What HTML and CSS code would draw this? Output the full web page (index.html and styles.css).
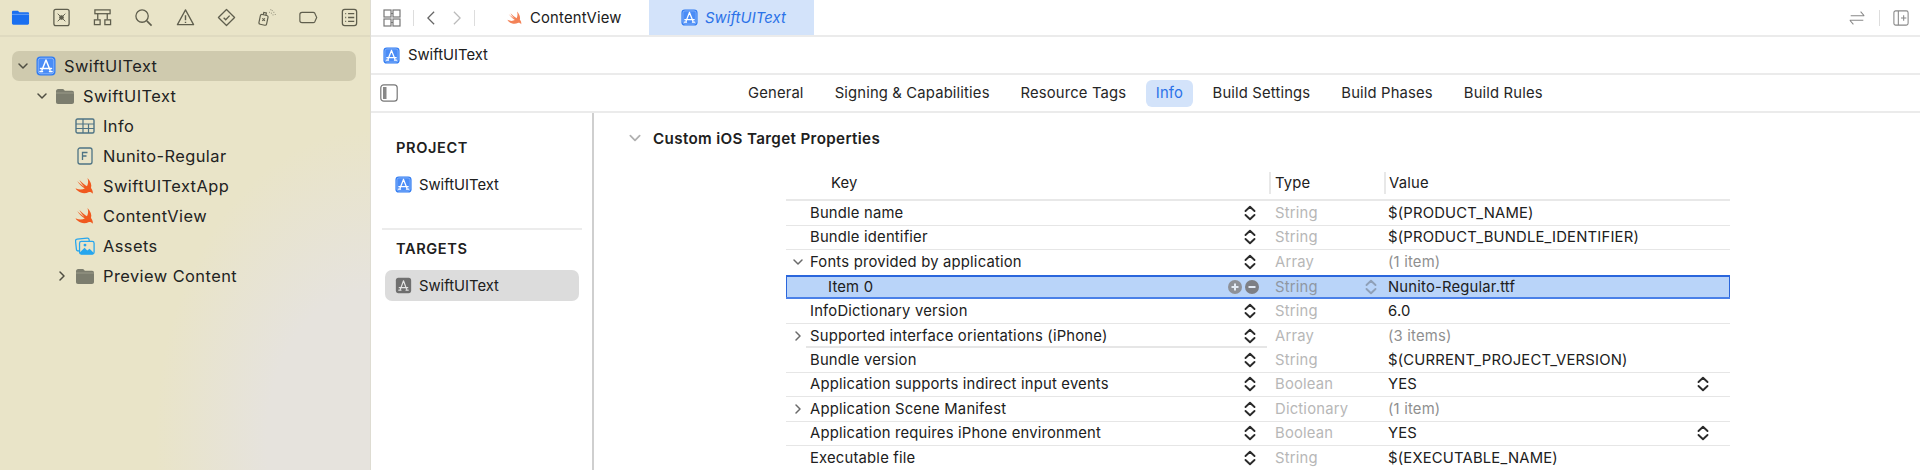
FILE: index.html
```html
<!DOCTYPE html>
<html lang="en">
<head>
<meta charset="utf-8">
<title>SwiftUIText</title>
<link rel="stylesheet" href="styles.css">
</head>
<body>
<svg class="defs" width="0" height="0" aria-hidden="true">
  <symbol id="app" viewBox="0 0 20 20">
    <rect x=".5" y=".5" width="19" height="19" rx="4" fill="#2f7bf2"/>
    <rect x="2.2" y="2.2" width="15.6" height="15.6" rx="2.5" fill="#4a8cf6" stroke="#a9c9fb" stroke-width=".7"/>
    <path d="M10 4 6 14M10 4l4 10M4.5 12.5h11M4 15.5h2.5M13.5 15.5H16" fill="none" stroke="#fff" stroke-width="1.5" stroke-linecap="round"/>
  </symbol>
  <symbol id="appgray" viewBox="0 0 20 20">
    <rect x="1" y="1" width="18" height="18" rx="3" fill="#6f6f6f"/>
    <path d="M10 4.5 6.5 14M10 4.5l3.500 9.500M5 12.500h10M4.500 15.500h2.500M13 15.500h2.500" fill="none" stroke="#e4e4e4" stroke-width="1.400" stroke-linecap="round"/>
  </symbol>
  <symbol id="swift" viewBox="0 0 20 18">
    <path d="M12.500 1C15.500 4 17 8 16 11c1.500 2 2.200 4 1.700 5.800-1-1.500-2.700-2.200-4.300-1.600-2.800 1.500-7.400 1.400-11-1.600C1.800 13.100 1.100 12.300.5 11.200c3 1.700 6.600 1.900 9.300.4C6.800 9.600 4.200 7 2.200 4c2.400 2.400 5 4.400 7.300 5.800C7.400 7.800 5.500 5.300 4.400 3c2.700 2.700 5.600 5 7.600 6.300 1.300-2.500 1.500-5.400.5-8.300z" fill="#f0591f"/>
  </symbol>
  <symbol id="folder" viewBox="0 0 20 18">
    <path d="M1 4.500C1 3 1.800 2 3.200 2h4c1 0 1.500.4 2 1l.6.8H17c1.300 0 2 .8 2 2V15c0 1.300-.8 2-2 2H3c-1.300 0-2-.8-2-2z" fill="#7c7d6e"/>
    <path d="M1 6h18" stroke="#a2a291" stroke-width=".8"/>
  </symbol>
  <symbol id="step" viewBox="0 0 16 18">
    <path d="M3.500 7 8 2.800 12.500 7M3.500 11 8 15.200 12.500 11" fill="none" stroke="currentColor" stroke-width="1.900" stroke-linecap="round" stroke-linejoin="round"/>
  </symbol>
  <symbol id="chevd" viewBox="0 0 12 12">
    <path d="M2 4l4 4 4-4" fill="none" stroke="currentColor" stroke-width="1.500" stroke-linecap="round" stroke-linejoin="round"/>
  </symbol>
  <symbol id="chevr" viewBox="0 0 12 12">
    <path d="M4 2l4 4-4 4" fill="none" stroke="currentColor" stroke-width="1.500" stroke-linecap="round" stroke-linejoin="round"/>
  </symbol>
</svg>

<div class="app">
  <aside class="side">
    <nav class="side-tools">
      <svg class="tool" viewBox="0 0 20 18"><path d="M1 3.500C1 2.500 1.600 2 2.500 2h4.800l1.500 1.500h8.700c1 0 1.500.5 1.500 1.500v10c0 1-.6 1.500-1.500 1.500h-15C1.600 16.500 1 16 1 15z" fill="#1a6ff0" stroke="none"/><path d="M1 5.700h18" stroke="#8fbaf8" stroke-width=".7"/></svg>
      <svg class="tool" viewBox="0 0 20 20"><rect x="2" y="1.500" width="16" height="17" rx="2"/><path d="M6 6l8 8M14 6l-8 8" stroke-width="1"/><circle cx="10" cy="10" r="1.800" fill="#5f5e4d"/></svg>
      <svg class="tool" viewBox="0 0 20 20"><rect x="2" y="2" width="16" height="4"/><path d="M5 6v6M15 6v6"/><rect x="1.500" y="12.500" width="6" height="5"/><rect x="12.500" y="12.500" width="6" height="5"/></svg>
      <svg class="tool" viewBox="0 0 20 20"><circle cx="8.500" cy="8.500" r="6.500"/><path d="M13.500 13.500 18.500 18.500" stroke-width="1.700"/></svg>
      <svg class="tool" viewBox="0 0 20 20"><path d="M10 2 18.500 17.500h-17z" stroke-linejoin="round"/><path d="M10 7.500v5.500M10 14.500v1.300" stroke-width="1.500"/></svg>
      <svg class="tool" viewBox="0 0 20 20"><path d="M10 1.500 18.500 10 10 18.500 1.500 10z" stroke-linejoin="round"/><path d="M7 10.200l2.200 2.200L13.300 8"/></svg>
      <svg class="tool" viewBox="0 0 22 20"><rect x="2" y="7" width="9" height="11.500" rx="1.800" transform="rotate(12 6.500 12)"/><path d="M6 7l.7-3 3 .6-.6 3M5 11l3 3M8 11l-3 3"/><path d="M13 4h.8M16 2h.8M15 5h.8M18 4h.8M17 7h.8M19.500 6.500h.8M14.500 1h.8" stroke-dasharray="1 1" stroke-width="1"/></svg>
      <svg class="tool" viewBox="0 0 22 20"><path d="M3.500 4h13c.8 0 1.300.3 1.800 1l2.200 5-2.200 5c-.5.700-1 1-1.800 1h-13C2 16 1 15 1 13.500v-7C1 5 2 4 3.500 4z"/></svg>
      <svg class="tool" viewBox="0 0 20 20"><rect x="2.500" y="1.500" width="15" height="17" rx="2.500"/><path d="M5.500 6h1M5.500 10h1M5.500 14h1M8.500 6h6.500M8.500 10h6.500M8.500 14h6.500"/></svg>
    </nav>
    <ul class="tree">
      <li class="node sel l0"><svg class="chev"><use href="#chevd"/></svg><svg class="nicon"><use href="#app"/></svg><span>SwiftUIText</span></li>
      <li class="node l1"><svg class="chev"><use href="#chevd"/></svg><svg class="nicon"><use href="#folder"/></svg><span>SwiftUIText</span></li>
      <li class="node l2"><span class="chev"></span><svg class="nicon" viewBox="0 0 20 16"><rect x="1" y="1" width="18" height="14" rx="1.500" fill="none" stroke="#4e7384" stroke-width="1.400"/><path d="M1 6h18M1 10.500h18M8 1v14M13.500 6v9" stroke="#4e7384" stroke-width="1.200"/></svg><span>Info</span></li>
      <li class="node l2"><span class="chev"></span><svg class="nicon" viewBox="0 0 20 20"><rect x="3" y="2" width="14" height="16" rx="2" fill="none" stroke="#4e7384" stroke-width="1.300"/><path d="M7.500 14V6.500h5M7.500 10h4" fill="none" stroke="#4e7384" stroke-width="1.300"/></svg><span>Nunito-Regular</span></li>
      <li class="node l2"><span class="chev"></span><svg class="nicon"><use href="#swift"/></svg><span>SwiftUITextApp</span></li>
      <li class="node l2"><span class="chev"></span><svg class="nicon"><use href="#swift"/></svg><span>ContentView</span></li>
      <li class="node l2"><span class="chev"></span><svg class="nicon" viewBox="0 0 22 20"><rect x="1" y="2" width="15" height="13" rx="2" fill="none" stroke="#27a6ee" stroke-width="1.400" transform="rotate(-6 8 8)"/><rect x="5" y="5" width="16" height="14" rx="2" fill="#e9e4c8" stroke="#27a6ee" stroke-width="1.400"/><path d="M5.500 17l5-5 3 3 2.500-2 4.500 4.500V18c0 .5-.4 1-1 1H6.500c-.6 0-1-.5-1-1z" fill="#27a6ee"/><circle cx="11" cy="9" r="1.600" fill="#27a6ee"/></svg><span>Assets</span></li>
      <li class="node l2"><svg class="chev"><use href="#chevr"/></svg><svg class="nicon"><use href="#folder"/></svg><span>Preview Content</span></li>
    </ul>
  </aside>

  <main class="main">
    <header class="toolbar">
      <svg class="ticon grid" viewBox="0 0 18 18"><rect x="1" y="1" width="7" height="7"/><rect x="10" y="1" width="7" height="7"/><rect x="1" y="10" width="7" height="7"/><rect x="10" y="10" width="7" height="7"/><path d="M8 4.500h2M8 13.500h2"/></svg>
      <i class="tsep"></i>
      <svg class="ticon nav" viewBox="0 0 12 18"><path d="M9.500 2 2.500 9l7 7"/></svg>
      <svg class="ticon nav dim" viewBox="0 0 12 18"><path d="M2.500 2l7 7-7 7"/></svg>
      <i class="tsep"></i>
      <div class="tab first"><svg class="tabicon faded"><use href="#swift"/></svg><span>ContentView</span></div>
      <div class="tab active"><svg class="tabicon"><use href="#app"/></svg><span>SwiftUIText</span></div>
      <div class="toolbar-end">
        <svg class="ticon swap" viewBox="0 0 20 18"><path d="M3 6.500h15M14 2l4 4.500M17 11.500H2M6 16l-4-4.500"/></svg>
        <i class="tsep end"></i>
        <svg class="ticon addp" viewBox="0 0 18 18"><rect x="1" y="1" width="16" height="16" rx="2"/><path d="M6 1v16M9 9h6M12 6v6"/></svg>
      </div>
    </header>

    <div class="jump"><svg class="jicon"><use href="#app"/></svg><span>SwiftUIText</span></div>

    <div class="tabs-bar">
      <svg class="panel" viewBox="0 0 18 18"><rect x=".8" y=".8" width="16.400" height="16.400" rx="3" fill="none" stroke="#777" stroke-width="1.200"/><rect x="3" y="3" width="3.500" height="12" fill="#888"/></svg>
      <nav class="tabs">
        <span>General</span><span>Signing &amp; Capabilities</span><span>Resource Tags</span><span class="on">Info</span><span>Build Settings</span><span>Build Phases</span><span>Build Rules</span>
      </nav>
    </div>

    <div class="content">
      <section class="targets">
        <h2>PROJECT</h2>
        <div class="titem"><svg><use href="#app"/></svg><span>SwiftUIText</span></div>
        <hr>
        <h2>TARGETS</h2>
        <div class="titem cur"><svg><use href="#appgray"/></svg><span>SwiftUIText</span></div>
      </section>
      <section class="props">
        <h1><svg class="h-chev"><use href="#chevd"/></svg>Custom iOS Target Properties</h1>
        <div class="plist">
          <div class="head"><span class="hkey">Key</span><span class="htype">Type</span><span class="hval">Value</span></div>

          <div class="row"><i></i><span>Bundle name</span><svg class="st"><use href="#step"/></svg><span class="ty">String</span><span>$(PRODUCT_NAME)</span></div>
          <div class="row"><i></i><span>Bundle identifier</span><svg class="st"><use href="#step"/></svg><span class="ty">String</span><span>$(PRODUCT_BUNDLE_IDENTIFIER)</span></div>
          <div class="row above"><svg class="dis"><use href="#chevd"/></svg><span>Fonts provided by application</span><svg class="st"><use href="#step"/></svg><span class="ty">Array</span><span class="mut">(1 item)</span></div>
          <div class="row picked">
            <i></i>
            <span class="itemkey">Item 0<svg class="pm" viewBox="0 0 14 14"><circle cx="7" cy="7" r="7" fill="#8e9198"/><path d="M3.500 7h7M7 3.500v7" stroke="#e4ebf5" stroke-width="2"/></svg></span>
            <span class="minus"><svg class="pm" viewBox="0 0 14 14"><circle cx="7" cy="7" r="7" fill="#7d7f85"/><path d="M3.500 7h7" stroke="#e4ebf5" stroke-width="2"/></svg></span>
            <span class="ty tyst">String<svg class="st soft"><use href="#step"/></svg></span>
            <span>Nunito-Regular.ttf</span>
          </div>
          <div class="row"><i></i><span>InfoDictionary version</span><svg class="st"><use href="#step"/></svg><span class="ty">String</span><span>6.0</span></div>
          <div class="row partial"><svg class="dis"><use href="#chevr"/></svg><span>Supported interface orientations (iPhone)</span><svg class="st"><use href="#step"/></svg><span class="ty">Array</span><span class="mut">(3 items)</span></div>
          <div class="row"><i></i><span>Bundle version</span><svg class="st"><use href="#step"/></svg><span class="ty">String</span><span>$(CURRENT_PROJECT_VERSION)</span></div>
          <div class="row"><i></i><span>Application supports indirect input events</span><svg class="st"><use href="#step"/></svg><span class="ty">Boolean</span><span>YES</span><svg class="st"><use href="#step"/></svg></div>
          <div class="row"><svg class="dis"><use href="#chevr"/></svg><span>Application Scene Manifest</span><svg class="st"><use href="#step"/></svg><span class="ty">Dictionary</span><span class="mut">(1 item)</span></div>
          <div class="row"><i></i><span>Application requires iPhone environment</span><svg class="st"><use href="#step"/></svg><span class="ty">Boolean</span><span>YES</span><svg class="st"><use href="#step"/></svg></div>
          <div class="row"><i></i><span>Executable file</span><svg class="st"><use href="#step"/></svg><span class="ty">String</span><span>$(EXECUTABLE_NAME)</span></div>
        </div>
      </section>
    </div>
  </main>
</div>
</body>
</html>
```
FILE: styles.css
```css
* { box-sizing: border-box; }
html, body { margin: 0; height: 100%; overflow: hidden; background: #fff; }
body { font-family: Inter, "Liberation Sans", sans-serif; font-size: 14px; color: #202020; }
.defs { display: block; height: 0; }
svg { display: block; flex: none; }

.app { display: grid; grid-template-columns: 371px 1fr; height: 470px; overflow: hidden; }

/* navigator */
.side {
  border-right: 1px solid #dedcd2;
  background:
    radial-gradient(ellipse 215px 310px at 370px 440px, #e6e3dd 0%, #e6e3dd 48%, rgba(230,227,221,0) 100%),
    #e9e4c8;
}
.side-tools {
  height: 37px;
  display: flex;
  align-items: center;
  justify-content: space-between;
  padding: 0 11px;
  border-bottom: 2px solid #dfdac0;
}
.tool { width: 19px; height: 19px; fill: none; stroke: #5f5e4d; stroke-width: 1.35; }
.tree { list-style: none; margin: 13.500px 0 0; padding: 0; }
.node { height: 30px; display: flex; align-items: center; font-size: 16.400px; letter-spacing: .45px; color: #222; margin-left: 12px; margin-right: 14px; }
.sel { background: #cfcaae; border-radius: 7px; }
.l0 { padding-left: 5px; }
.l1 { padding-left: 24px; }
.l2 { padding-left: 44px; }
.chev { width: 12px; height: 12px; color: #4f4e42; margin-right: 7px; }
.nicon { width: 20px; height: 20px; margin-right: 8px; }

/* top toolbar */
.toolbar { height: 37px; display: flex; align-items: center; border-bottom: 2px solid #ebebeb; padding-left: 12px; }
.ticon { fill: none; stroke: #777; stroke-width: 1.2; }
.grid { width: 18px; height: 18px; }
.tsep { width: 1px; height: 16px; background: #ddd; margin-left: 12px; }
.nav { width: 12px; height: 16px; margin-left: 11px; stroke-width: 1.400; stroke: #666; }
.nav + .nav { margin-left: 14px; }
.dim { stroke: #bbb; }
.nav.dim { margin-right: -1px; }
.tab { height: 35px; display: flex; align-items: center; font-size: 14.800px; letter-spacing: .2px; }
.first { margin-left: 32px; width: 142px; }
.tabicon { width: 16px; height: 16px; margin-right: 7px; }
.faded { opacity: .75; }
.active { width: 165px; background: #d3e3fa; color: #2b72e8; font-style: italic; padding-left: 32px; letter-spacing: .1px; }
.active .tabicon { width: 17px; height: 17px; }
.toolbar-end { margin-left: auto; display: flex; align-items: center; padding-right: 11px; }
.swap { width: 18px; height: 18px; stroke: #888; }
.tsep.end { margin: 0 13px; }
.addp { width: 16px; height: 16px; stroke: #888; }

/* jump bar */
.jump { height: 38px; display: flex; align-items: center; gap: 8px; padding-left: 12px; border-bottom: 2px solid #ebebeb; font-size: 14.800px; }
.jicon { width: 17px; height: 17px; }

/* editor tabs */
.tabs-bar { height: 38px; display: flex; align-items: center; border-bottom: 2px solid #ebebeb; padding-left: 9px; }
.panel { width: 18px; height: 18px; }
.tabs { display: flex; align-items: center; margin-left: 338.500px; font-size: 14.800px; letter-spacing: .16px; gap: 8px; }
.tabs span { padding: 0 11.500px; height: 27px; line-height: 27px; border-radius: 6px; color: #262626; white-space: nowrap; }
.tabs .on { background: #d3e3fa; color: #2b72e8; padding: 0 10px; }

/* main content */
.content { display: grid; grid-template-columns: 223px 1fr; }
.targets { border-right: 2px solid #cfcfcf; height: 358px; padding: 0 13px 0 14px; }
.targets h2 { margin: 0; font-size: 14.600px; font-weight: 600; letter-spacing: .6px; padding-left: 11px; height: 26px; line-height: 26px; }
.targets h2:first-child { margin-top: 22px; }
.titem { display: flex; align-items: center; gap: 7px; height: 31px; font-size: 14.800px; padding-left: 10px; border-radius: 7px; margin-top: 8px; }
.titem svg { width: 17px; height: 17px; }
.cur { background: #dcdcdc; margin-top: 8px; }
.targets hr { border: 0; height: 2px; background: #ececec; margin: 28px -3px 6px -3px; }

.props { min-width: 0; }
.props h1 { margin: 0; height: 50px; display: flex; align-items: center; font-size: 15.200px; letter-spacing: .35px; font-weight: 600; padding-left: 34px; }
.h-chev { width: 14px; height: 14px; color: #b0b0b0; margin-right: 11px; }
.plist { width: 944px; margin: 6px 0 0 192px; font-size: 14.800px; letter-spacing: .2px; }
.head { height: 32px; display: flex; align-items: center; padding-bottom: 3px; border-bottom: 2px solid #e8e8e8; }
.hkey { margin-left: 45px; width: 438px; }
.htype { border-left: 2px solid #e8e8e8; padding-left: 4px; width: 115px; height: 22px; line-height: 22px; }
.hval { border-left: 2px solid #e8e8e8; padding-left: 3px; height: 22px; line-height: 22px; }
.row {
  height: 24.500px;
  display: grid;
  grid-template-columns: 24px 432px 16px 130px 307px 16px;
  align-items: center;
  border-bottom: 1.500px solid #e6e6e6;
  white-space: nowrap;
}
.row > :nth-child(4) { padding-left: 17px; }
.ty { color: #b7b7b7; }
.mut { color: #8f8f8f; }
.st { width: 16px; height: 18px; color: #2a2a2a; }
.dis { width: 12px; height: 12px; color: #6a6a6a; margin-left: 6px; }
.above { border-bottom-color: transparent; }
.partial {
  border-bottom: 0;
  background: linear-gradient(#e6e6e6, #e6e6e6) no-repeat 20px 100% / 461px 2px;
}
.picked {
  background: #b9d4f9;
  border: 0;
  border-top: 2px solid #2a66dc;
  border-bottom: 2px solid #4a80e8;
  box-shadow: inset 1px 0 #2a66dc, inset -1px 0 #2a66dc;
}
.itemkey { display: flex; align-items: center; justify-content: space-between; padding: 0 0 0 18px; }
.minus { padding-left: 3px; }
.pm { width: 14px; height: 14px; }
.tyst { display: flex; align-items: center; justify-content: space-between; padding-right: 9px; color: #8f97a3; }
.soft { color: #8fa0b8; }
```
